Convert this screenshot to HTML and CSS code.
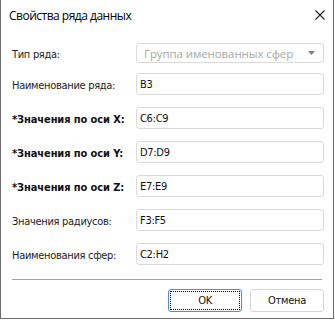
FILE: index.html
```html
<!DOCTYPE html>
<html lang="ru">
<head>
    <meta charset="UTF-8">
    <title>Свойства ряда данных</title>
    <link rel="stylesheet" href="styles.css">
</head>
<body>
    <div class="dialog">
        <div class="titlebar">
            <span class="title">Свойства ряда данных</span>
            <svg class="close" width="10" height="10" viewBox="0 0 10 10">
                <path d="M0.5 0.5 L9.5 9.5 M9.5 0.5 L0.5 9.5" stroke="#222" stroke-width="1.1" fill="none"/>
            </svg>
        </div>

        <div class="form">
            <div class="row first">
                <label>Тип ряда:</label>
                <div class="field select">
                    <span>Группа именованных сфер</span>
                    <svg width="7" height="4" viewBox="0 0 7 4"><path d="M0 0 H7 L3.5 4 Z" fill="#808080"/></svg>
                </div>
            </div>
            <div class="row">
                <label>Наименование ряда:</label>
                <div class="field">B3</div>
            </div>
            <div class="row">
                <label class="req">*Значения по оси X:</label>
                <div class="field">C6:C9</div>
            </div>
            <div class="row">
                <label class="req">*Значения по оси Y:</label>
                <div class="field">D7:D9</div>
            </div>
            <div class="row">
                <label class="req">*Значения по оси Z:</label>
                <div class="field">E7:E9</div>
            </div>
            <div class="row">
                <label>Значения радиусов:</label>
                <div class="field">F3:F5</div>
            </div>
            <div class="row">
                <label>Наименования сфер:</label>
                <div class="field">C2:H2</div>
            </div>
        </div>

        <div class="separator"></div>

        <div class="buttons">
            <button class="btn default"><span>OK</span></button>
            <button class="btn">Отмена</button>
        </div>
    </div>
</body>
</html>
```

FILE: styles.css
```css
body {
    margin: 0;
    background-color: white;
    font-family: "DejaVu Sans", sans-serif;
}
.dialog {
    width: 332px;
    height: 318px;
    border: 1px solid #6f6f6f;
    border-top: none;
    background-color: white;
}
.titlebar {
    height: 30px;
    display: flex;
    align-items: center;
    justify-content: space-between;
    padding: 0 8px 0 8px;
}
.title {
    font-family: "Open Sans", sans-serif;
    font-size: 12px;
    letter-spacing: -0.5px;
    color: #000;
}
.form {
    padding: 13px 9px 0 11px;
    display: flex;
    flex-direction: column;
    gap: 12px;
}
.row {
    display: flex;
    align-items: center;
    height: 22px;
}
.row.first {
    height: 20px;
    margin-bottom: -2px;
}
.row label {
    width: 124px;
    padding-top: 2px;
    font-size: 11px;
    font-stretch: semi-condensed;
    color: #222;
    letter-spacing: -0.3px;
}
.row label.req {
    font-weight: bold;
    color: #111;
    letter-spacing: -0.1px;
}
.field {
    flex: 1;
    height: 100%;
    box-sizing: border-box;
    border: 1px solid #dadada;
    border-radius: 3px;
    font-size: 11px;
    font-stretch: semi-condensed;
    color: #111;
    display: flex;
    align-items: center;
    padding-left: 3px;
    letter-spacing: -0.3px;
}
.select {
    justify-content: space-between;
    padding: 0 8px 0 7px;
    font-family: "Open Sans", sans-serif;
    font-stretch: normal;
    font-size: 11.5px;
    color: #a8a8a8;
    letter-spacing: -0.1px;
}
.separator {
    margin: 14px 11px 0 11px;
    border-top: 1px solid #a0a0a0;
}
.buttons {
    display: flex;
    justify-content: flex-end;
    gap: 8px;
    padding: 9px 9px 0 0;
}
.btn {
    width: 74px;
    height: 23px;
    background-color: white;
    border: 1px solid #d6d6d6;
    border-radius: 3px;
    font-family: "DejaVu Sans", sans-serif;
    font-stretch: semi-condensed;
    font-size: 11px;
    color: #111;
    padding: 0;
    letter-spacing: -0.3px;
}
.btn.default {
    border-color: #4a90d9;
    padding: 1px;
}
.btn.default span {
    display: flex;
    align-items: center;
    justify-content: center;
    height: 100%;
    border: 1px dotted #000;
    box-sizing: border-box;
}
```
